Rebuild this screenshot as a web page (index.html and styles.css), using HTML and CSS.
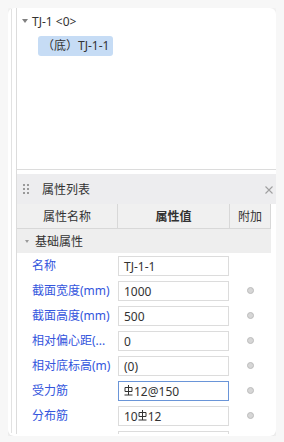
FILE: index.html
```html
<!DOCTYPE html>
<html lang="zh">
<head>
    <meta charset="UTF-8">
    <meta name="viewport" content="width=device-width, initial-scale=1.0">
    <title>属性列表</title>
    <link rel="stylesheet" href="styles.css">
</head>
<body>

    <div class="card">
        <div class="rail"></div>

        <div class="main">
            <!-- Tree of components -->
            <div class="tree">
                <div class="tree-row">
                    <span class="caret"></span>
                    <span>TJ-1 &lt;0&gt;</span>
                </div>
                <div class="tree-item selected">（底）TJ-1-1</div>
            </div>

            <!-- Property list panel -->
            <div class="panel">
                <div class="panel-header">
                    <span class="grip">
                        <i></i><i></i><i></i><i></i><i></i><i></i>
                    </span>
                    <span class="panel-title">属性列表</span>
                    <svg class="close" width="8" height="8" viewBox="0 0 8 8">
                        <path d="M0.5 0.5L7.5 7.5M7.5 0.5L0.5 7.5" stroke="#a0a0a0" stroke-width="1.1" fill="none"/>
                    </svg>
                </div>

                <div class="props">
                    <div class="col-head">
                        <div class="cell">属性名称</div>
                        <div class="cell bold">属性值</div>
                        <div class="cell">附加</div>
                    </div>

                    <div class="group">
                        <span class="caret small"></span>
                        <span>基础属性</span>
                    </div>

                    <div class="row">
                        <div class="label">名称</div>
                        <div class="value"><div class="box">TJ-1-1</div></div>
                        <div class="extra"></div>
                    </div>
                    <div class="row">
                        <div class="label">截面宽度(mm)</div>
                        <div class="value"><div class="box">1000</div></div>
                        <div class="extra"><span class="dot"></span></div>
                    </div>
                    <div class="row">
                        <div class="label">截面高度(mm)</div>
                        <div class="value"><div class="box">500</div></div>
                        <div class="extra"><span class="dot"></span></div>
                    </div>
                    <div class="row">
                        <div class="label">相对偏心距(...</div>
                        <div class="value"><div class="box">0</div></div>
                        <div class="extra"><span class="dot"></span></div>
                    </div>
                    <div class="row">
                        <div class="label">相对底标高(m)</div>
                        <div class="value"><div class="box">(0)</div></div>
                        <div class="extra"><span class="dot"></span></div>
                    </div>
                    <div class="row">
                        <div class="label">受力筋</div>
                        <div class="value">
                            <div class="box focus"><svg class="bar" width="9" height="11" viewBox="0 0 9 11"><path d="M4.5 0V10M1 2.5H8V6.5H1ZM0.5 10H8.5" stroke="#333" stroke-width="1" fill="none"/></svg>12@150</div>
                        </div>
                        <div class="extra"><span class="dot"></span></div>
                    </div>
                    <div class="row">
                        <div class="label">分布筋</div>
                        <div class="value">
                            <div class="box">10<svg class="bar" width="9" height="11" viewBox="0 0 9 11"><path d="M4.5 0V10M1 2.5H8V6.5H1ZM0.5 10H8.5" stroke="#333" stroke-width="1" fill="none"/></svg>12</div>
                        </div>
                        <div class="extra"><span class="dot"></span></div>
                    </div>
                    <div class="row">
                        <div class="label"></div>
                        <div class="value"><div class="box"></div></div>
                        <div class="extra"></div>
                    </div>
                </div>
            </div>
        </div>
    </div>

</body>
</html>
```

FILE: styles.css
```css
body {
    margin: 8px;
    background-color: #f7f7f7;
    font-family: "Noto Sans", "Noto Sans CJK SC", sans-serif;
    font-size: 12px;
    color: #333;
}

.card {
    display: flex;
    width: 268px;
    height: 428px;
    background-color: #fff;
    border-radius: 6px;
    box-shadow: 0 1px 6px rgba(0, 0, 0, 0.12);
    overflow: hidden;
}

/* Thin splitter on the left */
.rail {
    width: 4px;
    margin: 1px 0 3px 3px;
    border-left: 1px solid #e2e2e2;
}

.main {
    flex: 1;
    display: flex;
    flex-direction: column;
    border-left: 1px solid #dcdcdc;
    margin-bottom: 2px;
}

/* Tree */
.tree {
    flex-shrink: 0;
    height: 157px;
    padding-top: 4px;
    border-bottom: 1px solid #dcdcdc;
}

.tree-row {
    display: flex;
    align-items: center;
    height: 18px;
    padding-left: 5px;
    gap: 4px;
}

.caret {
    width: 0;
    height: 0;
    border-left: 3px solid transparent;
    border-right: 3px solid transparent;
    border-top: 4px solid #808080;
}

.tree-item {
    display: inline-block;
    margin: 6px 0 0 21px;
    padding: 0 4px;
    height: 20px;
    line-height: 20px;
    border-radius: 3px;
}

.tree-item.selected {
    background-color: #c6dcf5;
}

/* Property panel */
.panel {
    flex: 1;
    margin-top: 4px;
    display: flex;
    flex-direction: column;
    overflow: hidden;
}

.panel > * {
    flex-shrink: 0;
}

.panel-header {
    display: flex;
    align-items: center;
    height: 30px;
    background-color: #ededef;
    padding: 0 3px 0 6px;
}

.grip {
    display: grid;
    grid-template-columns: 2px 2px;
    column-gap: 2px;
    row-gap: 2px;
    width: 6px;
}

.grip i {
    width: 2px;
    height: 2px;
    background-color: #9a9a9a;
}

.panel-title {
    flex: 1;
    margin-left: 13px;
}

.close {
    margin-top: 1px;
}

.props {
    margin-right: 5px;
}

.col-head {
    display: grid;
    grid-template-columns: 101px 112px 41px;
    height: 24px;
    background-color: #f0f0f0;
    border-bottom: 1px solid #d8d8d8;
}

.col-head .cell {
    display: flex;
    align-items: center;
    justify-content: center;
    border-right: 1px solid #d8d8d8;
}

.col-head .bold {
    font-weight: bold;
}

.group {
    display: flex;
    align-items: center;
    gap: 6px;
    height: 24px;
    padding-left: 8px;
    background-color: #eeeeee;
}

.caret.small {
    border-left-width: 2.5px;
    border-right-width: 2.5px;
    border-top-width: 3px;
    border-top-color: #999;
}

.row {
    display: grid;
    grid-template-columns: 101px 112px 41px;
    height: 25px;
}

.label {
    padding-left: 15px;
    line-height: 25px;
    color: #3355dd;
    white-space: nowrap;
}

.value {
    padding-top: 3px;
}

.box {
    display: flex;
    align-items: center;
    width: 111px;
    height: 20px;
    box-sizing: border-box;
    padding-left: 5px;
    border: 1px solid #dcdcdc;
    background-color: #fff;
}

.box.focus {
    border-color: #6a95d8;
}

.bar {
    margin: 0 1px 1px 0;
}

.extra {
    display: flex;
    align-items: center;
    justify-content: center;
}

.dot {
    width: 7px;
    height: 7px;
    box-sizing: border-box;
    border-radius: 50%;
    background-color: #d6d6d6;
    border: 1px solid #bcbcbc;
}
```
